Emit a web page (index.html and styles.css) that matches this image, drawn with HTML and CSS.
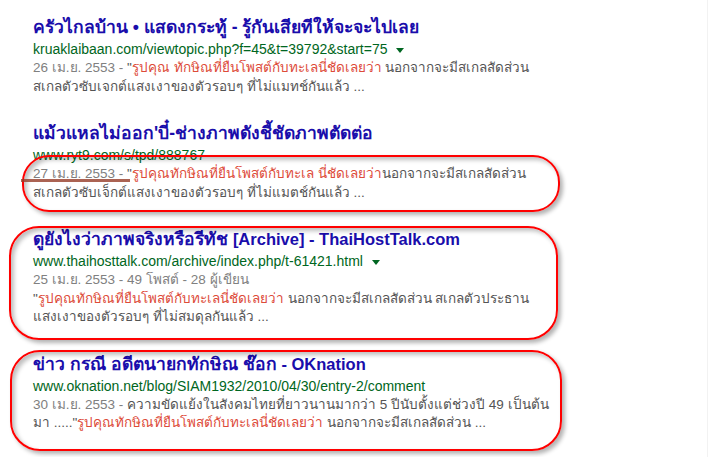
FILE: index.html
```html
<!DOCTYPE html>
<html lang="th">
<head>
  <meta charset="UTF-8" />
  <title>ผลการค้นหา</title>
  <link rel="stylesheet" href="styles.css">
</head>
<body>

  <div class="results">
    <!-- Result 1 -->
    <div class="result">
      <h3 class="title"><a href="#">ครัวไกลบ้าน • แสดงกระทู้ - รู้กันเสียทีให้จะจะไปเลย</a></h3>
      <div class="url">kruaklaibaan.com/viewtopic.php?f=45&amp;t=39792&amp;start=75 <span class="arrow"></span></div>
      <div class="snippet">
        <span class="line"><span class="date">26 เม.ย. 2553 - </span>"<em>รูปคุณ ทักษิณที่ยืนโพสต์กับทะเลนี่ชัดเลยว่า</em> นอกจากจะมีสเกลสัดส่วน</span>
        <span class="line">สเกลตัวซับเจกต์แสงเงาของตัวรอบๆ ที่ไม่แมทช์กันแล้ว ...</span>
      </div>
    </div>

    <!-- Result 2 -->
    <div class="result">
      <h3 class="title"><a href="#">แม้วแหลไม่ออก'บี๋-ช่างภาพดังชี้ชัดภาพตัดต่อ</a></h3>
      <div class="url">www.ryt9.com/s/tpd/888767</div>
      <div class="snippet">
        <span class="line"><span class="date">27 เม.ย. 2553 - </span>"<em>รูปคุณทักษิณที่ยืนโพสต์กับทะเล นี่ชัดเลยว่า</em>นอกจากจะมีสเกลสัดส่วน</span>
        <span class="line">สเกลตัวซับเจ็กต์แสงเงาของตัวรอบๆ ที่ไม่แมตช์กันแล้ว ...</span>
      </div>
    </div>

    <!-- Result 3 -->
    <div class="result">
      <h3 class="title"><a href="#">ดูยังไงว่าภาพจริงหรือรีทัช <span class="latin">[Archive] - ThaiHostTalk.com</span></a></h3>
      <div class="url">www.thaihosttalk.com/archive/index.php/t-61421.html <span class="arrow"></span></div>
      <div class="snippet">
        <span class="line date">25 เม.ย. 2553 - 49 โพสต์ - 28 ผู้เขียน</span>
        <span class="line">"<em>รูปคุณทักษิณที่ยืนโพสต์กับทะเลนี่ชัดเลยว่า</em> นอกจากจะมีสเกลสัดส่วน สเกลตัวประธาน</span>
        <span class="line">แสงเงาของตัวรอบๆ ที่ไม่สมดุลกันแล้ว ...</span>
      </div>
    </div>

    <!-- Result 4 -->
    <div class="result">
      <h3 class="title"><a href="#">ข่าว กรณี อดีตนายกทักษิณ ช๊อก <span class="latin">- OKnation</span></a></h3>
      <div class="url">www.oknation.net/blog/SIAM1932/2010/04/30/entry-2/comment</div>
      <div class="snippet">
        <span class="line"><span class="date">30 เม.ย. 2553 - </span>ความขัดแย้งในสังคมไทยที่ยาวนานมากว่า 5 ปีนับตั้งแต่ช่วงปี 49 เป็นต้น</span>
        <span class="line">มา .....&quot;<em>รูปคุณทักษิณที่ยืนโพสต์กับทะเลนี่ชัดเลยว่า</em> นอกจากจะมีสเกลสัดส่วน ...</span>
      </div>
    </div>
  </div>

  <!-- hand-drawn annotations -->
  <div class="mark mark-1"></div>
  <div class="mark mark-2"></div>
  <div class="mark mark-3"></div>
  <div class="strike"></div>
  <div class="edge"></div>

</body>
</html>
```

FILE: styles.css
```css
body {
  font-family: Arial, "Liberation Sans", Tahoma, sans-serif;
  margin: 0;
  padding: 0;
  background: #fff;
  color: #545454;
}

.results {
  padding: 15px 0 0 33px;
}

.result {
  margin-bottom: 25px;
}

.title {
  margin: 0;
  font-size: 17.5px;
  font-weight: bold;
  line-height: 24px;
  white-space: nowrap;
}

.title a {
  color: #1a0dab;
  text-decoration: none;
}

.title .latin {
  font-size: 16.5px;
}

.url {
  font-size: 14px;
  line-height: 20px;
  color: #006621;
  white-space: nowrap;
}

.arrow {
  display: inline-block;
  margin-left: 5px;
  vertical-align: middle;
  border-left: 4px solid transparent;
  border-right: 4px solid transparent;
  border-top: 5px solid #006621;
}

.snippet {
  font-size: 13.5px;
  line-height: 18.5px;
}

.snippet .line {
  display: block;
  white-space: nowrap;
}

.date {
  color: #808080;
}

em {
  font-style: normal;
  color: #dd4b39;
}

/* red marker loops drawn over the results */
.mark {
  position: absolute;
  border: 2px solid #ff0000;
  border-radius: 30px;
  box-shadow: 3px 3px 4px rgba(0, 0, 0, 0.3), inset 3px 3px 4px rgba(0, 0, 0, 0.25);
}

.mark-1 {
  left: 22px;
  top: 155px;
  width: 534px;
  height: 53px;
  border-radius: 27px;
}

.mark-2 {
  left: 9px;
  top: 226px;
  width: 545px;
  height: 110px;
}

.mark-3 {
  left: 10px;
  top: 350px;
  width: 548px;
  height: 97px;
}

.strike {
  position: absolute;
  left: 21px;
  top: 179px;
  width: 109px;
  height: 3px;
  background: rgba(150, 60, 40, 0.8);
}

.edge {
  position: absolute;
  left: 707px;
  top: 0;
  width: 1px;
  height: 457px;
  background: #f2f2f2;
}
```
